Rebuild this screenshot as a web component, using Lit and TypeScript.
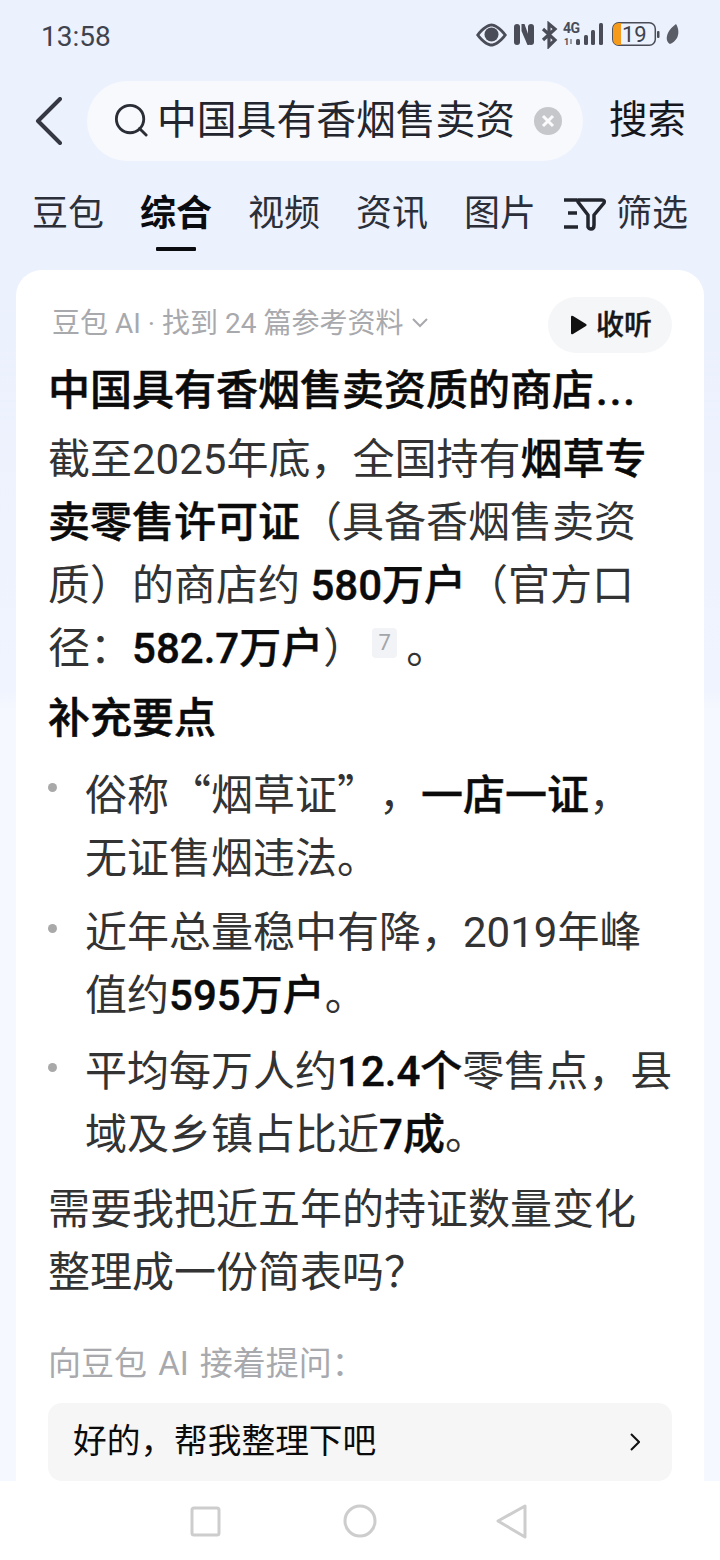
import { LitElement, html, css } from "lit";
import { customElement } from "lit/decorators.js";

@customElement("app-root")
export class AppRoot extends LitElement {
  static styles = css`
    :host {
      display: block;
      width: 720px;
      height: 1560px;
      overflow: hidden;
      font-family: Roboto, "Noto Sans CJK SC", sans-serif;
      color: #333;
    }
    .page {
      height: 1560px;
      display: flex;
      flex-direction: column;
      background: linear-gradient(180deg, #ebf1fd 0, #ebf1fd 270px, #f0f4fe 690px, #f5f8fe 710px, #f5f8fe 100%);
    }
    .status {
      height: 70px;
      flex: none;
      display: flex;
      align-items: center;
      justify-content: space-between;
      padding: 2px 38px 0 41px;
      box-sizing: border-box;
      color: #3f434d;
      font-size: 28px;
    }
    .status svg { display: block; margin-top: -2px; }
    .search-row {
      height: 82px;
      flex: none;
      margin-top: 10px;
      display: flex;
      align-items: center;
      padding: 0 34px 0 35px;
    }
    .back { flex: none; width: 52px; }
    .pill {
      flex: none;
      width: 496px;
      height: 80px;
      border-radius: 40px;
      background: #f8f9fd;
      display: flex;
      align-items: center;
      box-sizing: border-box;
      padding: 0 21px 0 27px;
      font-size: 39.800px;
      color: #23262e;
      white-space: nowrap;
    }
    .pill svg.mag { margin: -3px 10px 0 0; flex: none; }
    .pill span { flex: 1; overflow: hidden; padding-bottom: 10px; margin-left: -1px; }
    .go {
      margin-left: auto;
      font-size: 38.500px;
      color: #15171c;
      white-space: nowrap;
      padding-bottom: 10px;
    }
    .tabs {
      flex: none;
      height: 108px;
      box-sizing: border-box;
      padding: 26px 32px 0;
      display: flex;
      gap: 36px;
      font-size: 36px;
      color: #2b2f3a;
      white-space: nowrap;
    }
    .tab { display: flex; flex-direction: column; align-items: center; line-height: 52px; width: 72px; }
    .tab.on { font-weight: 700; color: #0b0c10; }
    .tab.on::after {
      content: "";
      width: 40px;
      height: 4px;
      margin-top: 7px;
      background: #0b0c10;
      border-radius: 1px;
    }
    .filter { display: flex; align-items: flex-start; gap: 10px; line-height: 52px; margin-left: -8px; }
    .filter svg { margin-top: 9px; }
    .card {
      flex: 1;
      min-height: 0;
      margin: 0 16px;
      background: #fff;
      border-radius: 26px 26px 0 0;
      padding: 27px 32px 0 32px;
      box-sizing: border-box;
      white-space: nowrap;
      font-size: 42px;
      line-height: 63px;
      text-spacing-trim: space-all;
      overflow: hidden;
    }
    .meta {
      display: flex;
      align-items: center;
      justify-content: space-between;
      height: 56px;
      padding-left: 4px;
      font-size: 28px;
      color: #a8a9ad;
    }
    .meta-text { display: flex; align-items: center; gap: 8px; margin-top: -4px; }
    .listen {
      display: flex;
      align-items: center;
      gap: 8px;
      width: 124px;
      height: 56px;
      box-sizing: border-box;
      padding-left: 22px;
      border-radius: 28px;
      background: #f5f6f8;
      color: #16171a;
      font-size: 28px;
      font-weight: 500;
      -webkit-text-stroke: 0.4px #16171a;
    }
    h2, p { margin: 0; font: inherit; }
    h2 { font-weight: 500; color: #0b0b0b; -webkit-text-stroke: 0.5px #0b0b0b; }
    .title { margin-top: 6px; height: 69px; letter-spacing: 0; }
    .dots { letter-spacing: 2px; margin-left: 2px; }
    b { font-weight: 500; color: #0b0b0b; -webkit-text-stroke: 0.4px #0b0b0b; }
    .cite {
      display: inline-block;
      width: 25px;
      height: 30px;
      margin: 0 9px 0 7px;
      border-radius: 4px;
      background: #f2f3f6;
      color: #a3a5aa;
      font-size: 22px;
      line-height: 30px;
      text-align: center;
      vertical-align: 13px;
    }
    .sub { margin-top: 7px; }
    .q { font-family: "Noto Sans CJK SC", sans-serif; }
    ul { list-style: none; margin: 10px 0 0; padding: 0; }
    li { position: relative; padding-left: 37px; margin-bottom: 13px; }
    li:first-child { margin-bottom: 11px; }
    li:last-child { margin-bottom: 12px; }
    li::before {
      content: "";
      position: absolute;
      left: 0;
      top: 23px;
      width: 9px;
      height: 9px;
      border-radius: 50%;
      background: #a9a9a9;
    }
    .ask {
      margin-top: 36px;
      font-size: 33px;
      line-height: 48px;
      word-spacing: 3px;
      color: #a8a9ad;
    }
    .suggest {
      margin: 15px 0 0;
      height: 78px;
      border-radius: 14px;
      background: #f6f6f7;
      display: flex;
      align-items: center;
      justify-content: space-between;
      padding: 0 32px 0 25px;
      font-size: 33.700px;
      line-height: 78px;
      color: #0b0b0b;
    }
    .nav {
      flex: none;
      height: 79px;
      background: #fff;
    }
    .nav svg { display: block; }
  `;

  render() {
    return html`<div class="page">
      <div class="status">
        <span>13:58</span>
        <svg width="206" height="28" viewBox="0 0 206 28" fill="#4a4d57">
          <path d="M0 14C6 5 13 2.500 15.500 2.500S25 5 31 14c-6 9-13 11.500-15.500 11.500S6 23 0 14zm3.500 0C8 20 13 22.500 15.500 22.500S23 20 27.500 14C23 8 18 5.500 15.500 5.500S8 8 3.500 14z"/>
          <circle cx="15.500" cy="13.500" r="7"/>
          <rect x="38" y="3" width="6" height="21" rx="3"/>
          <rect x="52" y="3" width="6" height="21" rx="3"/>
          <path d="M45.500 3h3l5 14v7h-2l-6-14z"/>
          <path d="M67 8l12 11-6 6V3l6 5-12 11" fill="none" stroke="#4a4d57" stroke-width="3.200"/>
          <text x="87" y="12" font-size="14" font-weight="700" font-family="Roboto, sans-serif" letter-spacing="-.5">4G</text>
          <text x="88" y="24" font-size="9" font-weight="700" font-family="Roboto, sans-serif">1</text>
          <rect x="94" y="18" width="2" height="5" fill="#9a9ca3"/>
          <rect x="100" y="18" width="4" height="6" rx="1.500"/>
          <rect x="108" y="14" width="4" height="10" rx="1.500"/>
          <rect x="115" y="9" width="4" height="15" rx="1.500"/>
          <rect x="123" y="2" width="4" height="22" rx="1.500"/>
          <rect x="136.800" y="1.800" width="42.500" height="22.500" rx="6" fill="none" stroke="#4a4d57" stroke-width="1.500"/>
          <path d="M137 8q0-6 6-6h2v22h-2q-6 0-6-6z" fill="#f59a1b"/>
          <text x="146" y="21" font-size="22" font-family="Roboto, sans-serif" fill="#3f434d">19</text>
          <rect x="181" y="10" width="2.500" height="7" rx="1"/>
          <path d="M200 3c3 5 3 10 1 14-2 3-4 5-7 6-2-1-4-4-3-8 1-5 5-9 9-12z" fill="#5a5d66"/>
        </svg>
      </div>

      <div class="search-row">
        <svg class="back" width="30" height="48" viewBox="0 0 52 48">
          <path d="M25 2L3 24l22 22" fill="none" stroke="#353842" stroke-width="4" stroke-linecap="round" stroke-linejoin="round"/>
        </svg>
        <div class="pill">
          <svg class="mag" width="34" height="34" viewBox="0 0 36 36">
            <circle cx="17" cy="17" r="14.500" fill="none" stroke="#2b2e36" stroke-width="3"/>
            <path d="M27 27l7 7" stroke="#2b2e36" stroke-width="3" stroke-linecap="round"/>
          </svg>
          <span>中国具有香烟售卖资</span>
          <svg width="28" height="28" viewBox="0 0 28 28">
            <circle cx="14" cy="14" r="14" fill="#c6c7ca"/>
            <path d="M9 9l10 10M19 9L9 19" stroke="#fbfbfd" stroke-width="3"/>
          </svg>
        </div>
        <span class="go">搜索</span>
      </div>

      <div class="tabs">
        <div class="tab">豆包</div>
        <div class="tab on">综合</div>
        <div class="tab">视频</div>
        <div class="tab">资讯</div>
        <div class="tab">图片</div>
        <div class="filter">
          <svg width="42" height="34" viewBox="0 0 42 34" fill="none" stroke="#23262e" stroke-width="3.500">
            <path d="M0 3h13M4 16h9M0 30h14"/>
            <path d="M14 3h24q3 0 2 3L30 18v10q0 4-3 4-2 0-3-2V18L14 5z" stroke-linejoin="round"/>
          </svg>
          <span>筛选</span>
        </div>
      </div>

      <div class="card">
        <div class="meta">
          <span class="meta-text">豆包 AI · 找到 24 篇参考资料
            <svg width="18" height="10" viewBox="0 0 18 10"><path d="M2 1l7 7 7-7" fill="none" stroke="#a8a9ad" stroke-width="2"/></svg>
          </span>
          <span class="listen">
            <svg width="18" height="20" viewBox="0 0 18 20"><path d="M1 2q0-2 2-1l13 8q1.500 1 0 2L3 19q-2 1-2-1z" fill="#111"/></svg>
            收听
          </span>
        </div>
        <h2 class="title">中国具有香烟售卖资质的商店<span class="dots">...</span></h2>
        <p>截至2025年底，全国持有<b>烟草专<br>卖零售许可证</b>（具备香烟售卖资<br>质）的商店约 <b>580万户</b>（官方口<br>径：<b>582.7万户</b>）<span class="cite">7</span>。</p>
        <h2 class="sub">补充要点</h2>
        <ul>
          <li>俗称<span class="q">“</span>烟草证<span class="q">”</span>，<b>一店一证</b>，<br>无证售烟违法。</li>
          <li>近年总量稳中有降，2019年峰<br>值约<b>595万户</b>。</li>
          <li>平均每万人约<b>12.4个</b>零售点，县<br>域及乡镇占比近<b>7成</b>。</li>
        </ul>
        <p>需要我把近五年的持证数量变化<br>整理成一份简表吗？</p>
        <div class="ask">向豆包 AI 接着提问：</div>
        <div class="suggest">
          <span>好的，帮我整理下吧</span>
          <svg width="10" height="20" viewBox="0 0 10 20"><path d="M1 2l8 8-8 8" fill="none" stroke="#111" stroke-width="2"/></svg>
        </div>
      </div>

      <div class="nav">
        <svg width="720" height="79" viewBox="0 0 720 79" fill="none" stroke="#cdcdcd" stroke-width="3">
          <rect x="192" y="27" width="27" height="27" rx="2"/>
          <circle cx="360" cy="40" r="15"/>
          <path d="M525 25v31L498 40z" stroke-linejoin="round"/>
        </svg>
      </div>
    </div>`;
  }
}
